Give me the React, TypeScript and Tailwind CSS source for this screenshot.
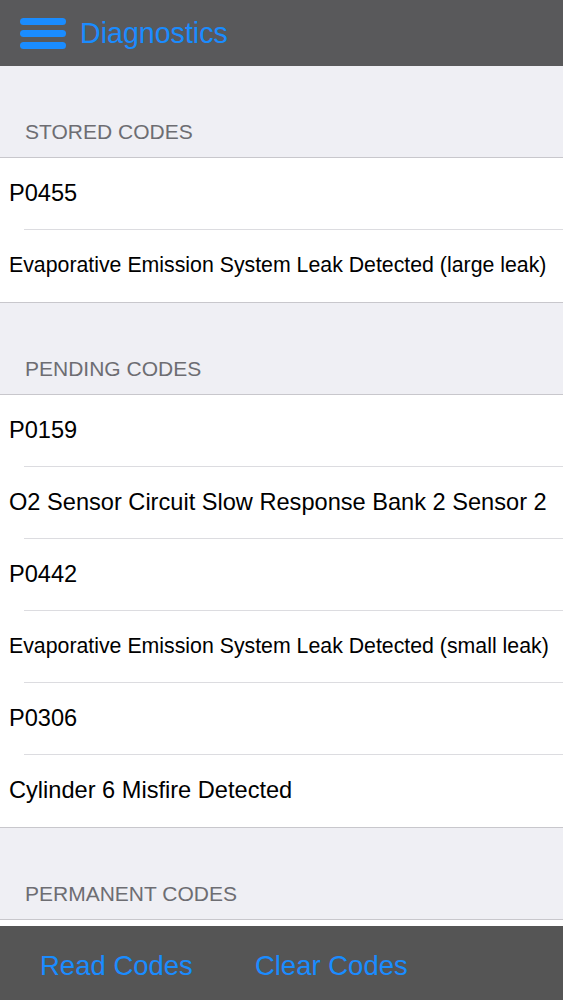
import React from "react";

const font = { fontFamily: '"Liberation Sans", Arial, sans-serif' };

function Row({ text, small, last }: { text: string; small?: boolean; last?: boolean }) {
  return (
    <div className="relative h-[72px] flex items-center bg-white">
      <span className={`pl-[9px] text-black whitespace-nowrap ${small ? "text-[21.3px]" : "text-[23.6px]"}`}>{text}</span>
      {!last && <div className="absolute left-[24px] right-0 bottom-0 h-px bg-[#dcdce0]" />}
    </div>
  );
}

function Section({ title, rows }: { title: string; rows: { text: string; small?: boolean }[] }) {
  return (
    <div>
      <div className="h-[92px] flex items-end pb-[10px] pl-[25px] text-[21px] text-[#6d6d72] border-b border-[#c8c7cc]">
        {title}
      </div>
      {rows.length > 0 && (
        <div className="border-b border-[#c8c7cc]">
          {rows.map((r, i) => (
            <Row key={i} text={r.text} small={r.small} last={i === rows.length - 1} />
          ))}
        </div>
      )}
    </div>
  );
}

export default function App() {
  return (
    <div className="w-[563px] h-[1000px] flex flex-col bg-[#efeff4] overflow-hidden" style={font}>
      <div className="h-[66px] shrink-0 bg-[#59595b] flex items-center pl-[20px]">
        <div className="flex flex-col gap-[5px] w-[46px]">
          <div className="h-[7px] rounded-full bg-[#1a8cff]" />
          <div className="h-[7px] rounded-full bg-[#1a8cff]" />
          <div className="h-[7px] rounded-full bg-[#1a8cff]" />
        </div>
        <span className="ml-[14px] text-[28.6px] text-[#1a8cff] leading-none">Diagnostics</span>
      </div>
      <div className="flex-1 overflow-hidden">
        <Section
          title="STORED CODES"
          rows={[
            { text: "P0455" },
            { text: "Evaporative Emission System Leak Detected (large leak)", small: true },
          ]}
        />
        <Section
          title="PENDING CODES"
          rows={[
            { text: "P0159" },
            { text: "O2 Sensor Circuit Slow Response Bank 2 Sensor 2" },
            { text: "P0442" },
            { text: "Evaporative Emission System Leak Detected (small leak)", small: true },
            { text: "P0306" },
            { text: "Cylinder 6 Misfire Detected" },
          ]}
        />
        <Section title="PERMANENT CODES" rows={[]} />
        <div className="h-[20px] bg-white" />
      </div>
      <div className="h-[74px] shrink-0 bg-[#555555] flex items-center pt-[6px] text-[27.5px] text-[#1a8cff]">
        <span className="ml-[40px]">Read Codes</span>
        <span className="ml-[62px]">Clear Codes</span>
      </div>
    </div>
  );
}
